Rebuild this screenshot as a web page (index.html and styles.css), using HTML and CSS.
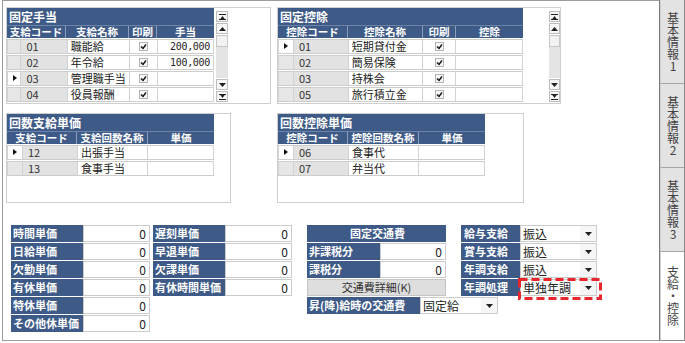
FILE: index.html
```html
<!DOCTYPE html>
<html lang="ja">
<head>
  <meta charset="UTF-8" />
  <title>支給・控除</title>
  <link rel="stylesheet" href="styles.css">
</head>
<body>
  <div class="app">
    <div class="main">
      <div class="row-top">
        <div class="box box-teate">
          <div class="grid grid-wide">
            <div class="grid-title">固定手当</div>
            <div class="grid-head">
              <span class="h-code">支給コード</span>
              <span class="c-name">支給名称</span>
              <span class="c-print">印刷</span>
              <span class="c-amt">手当</span>
            </div>
            <div class="grid-row">
              <span class="c-sel"></span><span class="c-code">01</span><span class="c-name">職能給</span>
              <span class="c-print"><i class="chk"></i></span><span class="c-amt num">200,000</span>
            </div>
            <div class="grid-row">
              <span class="c-sel"></span><span class="c-code">02</span><span class="c-name">年令給</span>
              <span class="c-print"><i class="chk"></i></span><span class="c-amt num">100,000</span>
            </div>
            <div class="grid-row">
              <span class="c-sel current"></span><span class="c-code">03</span><span class="c-name">管理職手当</span>
              <span class="c-print"><i class="chk"></i></span><span class="c-amt num"></span>
            </div>
            <div class="grid-row">
              <span class="c-sel"></span><span class="c-code">04</span><span class="c-name">役員報酬</span>
              <span class="c-print"><i class="chk"></i></span><span class="c-amt num"></span>
            </div>
          </div>
          <div class="scroll">
            <span class="sb-btn sb-first"></span>
            <span class="sb-btn sb-up"></span>
            <span class="sb-thumb"></span>
            <span class="sb-track"></span>
            <span class="sb-btn sb-down"></span>
            <span class="sb-btn sb-last"></span>
          </div>
        </div>

        <div class="box box-koujo">
          <div class="grid grid-wide">
            <div class="grid-title">固定控除</div>
            <div class="grid-head">
              <span class="h-code">控除コード</span>
              <span class="c-name">控除名称</span>
              <span class="c-print">印刷</span>
              <span class="c-amt2">控除</span>
            </div>
            <div class="grid-row">
              <span class="c-sel current"></span><span class="c-code">01</span><span class="c-name">短期貸付金</span>
              <span class="c-print"><i class="chk"></i></span><span class="c-amt2 num"></span>
            </div>
            <div class="grid-row">
              <span class="c-sel"></span><span class="c-code">02</span><span class="c-name">簡易保険</span>
              <span class="c-print"><i class="chk"></i></span><span class="c-amt2 num"></span>
            </div>
            <div class="grid-row">
              <span class="c-sel"></span><span class="c-code">03</span><span class="c-name">持株会</span>
              <span class="c-print"><i class="chk"></i></span><span class="c-amt2 num"></span>
            </div>
            <div class="grid-row">
              <span class="c-sel"></span><span class="c-code">05</span><span class="c-name">旅行積立金</span>
              <span class="c-print"><i class="chk"></i></span><span class="c-amt2 num"></span>
            </div>
          </div>
          <div class="scroll scroll-far">
            <span class="sb-btn sb-first"></span>
            <span class="sb-btn sb-up"></span>
            <span class="sb-thumb"></span>
            <span class="sb-track"></span>
            <span class="sb-btn sb-down"></span>
            <span class="sb-btn sb-last"></span>
          </div>
        </div>
      </div>

      <div class="row-mid">
        <div class="box box-kaisu">
          <div class="grid">
            <div class="grid-title">回数支給単価</div>
            <div class="grid-head">
              <span class="h-code">支給コード</span>
              <span class="c-name2">支給回数名称</span>
              <span class="c-price">単価</span>
            </div>
            <div class="grid-row">
              <span class="c-sel current"></span><span class="c-code">12</span><span class="c-name2">出張手当</span><span class="c-price"></span>
            </div>
            <div class="grid-row">
              <span class="c-sel"></span><span class="c-code">13</span><span class="c-name2">食事手当</span><span class="c-price"></span>
            </div>
          </div>
        </div>

        <div class="box box-kaisu2">
          <div class="grid">
            <div class="grid-title">回数控除単価</div>
            <div class="grid-head">
              <span class="h-code">控除コード</span>
              <span class="c-name2">控除回数名称</span>
              <span class="c-price">単価</span>
            </div>
            <div class="grid-row">
              <span class="c-sel current"></span><span class="c-code">06</span><span class="c-name2">食事代</span><span class="c-price"></span>
            </div>
            <div class="grid-row">
              <span class="c-sel"></span><span class="c-code">07</span><span class="c-name2">弁当代</span><span class="c-price"></span>
            </div>
          </div>
        </div>
      </div>

      <div class="fields">
        <div class="fcol">
          <div class="frow"><span class="flabel">時間単価</span><span class="fval">0</span></div>
          <div class="frow"><span class="flabel">日給単価</span><span class="fval">0</span></div>
          <div class="frow"><span class="flabel">欠勤単価</span><span class="fval">0</span></div>
          <div class="frow"><span class="flabel">有休単価</span><span class="fval">0</span></div>
          <div class="frow"><span class="flabel">特休単価</span><span class="fval">0</span></div>
          <div class="frow"><span class="flabel">その他休単価</span><span class="fval">0</span></div>
        </div>
        <div class="fcol fcol-b">
          <div class="frow"><span class="flabel">遅刻単価</span><span class="fval">0</span></div>
          <div class="frow"><span class="flabel">早退単価</span><span class="fval">0</span></div>
          <div class="frow"><span class="flabel">欠課単価</span><span class="fval">0</span></div>
          <div class="frow"><span class="flabel">有休時間単価</span><span class="fval">0</span></div>
        </div>
        <div class="fcol fcol-c">
          <div class="frow"><span class="flabel full">固定交通費</span></div>
          <div class="frow"><span class="flabel">非課税分</span><span class="fval">0</span></div>
          <div class="frow"><span class="flabel">課税分</span><span class="fval">0</span></div>
          <div class="frow"><span class="fbtn">交通費詳細(K)</span></div>
          <div class="frow frow-wide"><span class="flabel wide">昇(降)給時の交通費</span><span class="fsel">固定給<i class="arrow"></i></span></div>
        </div>
        <div class="fcol fcol-d">
          <div class="frow"><span class="flabel">給与支給</span><span class="fsel">振込<i class="arrow"></i></span></div>
          <div class="frow"><span class="flabel">賞与支給</span><span class="fsel">振込<i class="arrow"></i></span></div>
          <div class="frow"><span class="flabel">年調支給</span><span class="fsel">振込<i class="arrow"></i></span></div>
          <div class="frow">
            <span class="flabel">年調処理</span>
            <span class="fsel marked">単独年調<i class="arrow"></i>
              <svg class="mark" width="84" height="22" viewBox="0 0 84 22"><rect x="1.5" y="1.5" width="81" height="19" fill="none" stroke="#e8262b" stroke-width="3" stroke-dasharray="8 4"/></svg>
            </span>
          </div>
        </div>
      </div>
    </div>

    <div class="tabs">
      <div class="tab"><span class="tab-text">基本情報1</span></div>
      <div class="tab"><span class="tab-text">基本情報2</span></div>
      <div class="tab"><span class="tab-text">基本情報3</span></div>
      <div class="tab tab-on"><span class="tab-text">支給・控除</span></div>
    </div>
  </div>
</body>
</html>
```

FILE: styles.css
```css
* {
  box-sizing: border-box;
}
body {
  margin: 0;
  font-family: "Noto Sans CJK JP", sans-serif;
  font-size: 11px;
  color: #222;
  background: #fff;
}
.app {
  display: flex;
  width: 685px;
  height: 343px;
}
.main {
  width: 658px;
  height: 341px;
  margin-left: 2px;
  border: 1px solid #9c9c9c;
  border-right-color: #7a7a7a;
  padding: 6px 0 0 3px;
}

/* grids */
.row-top,
.row-mid {
  display: flex;
  gap: 6px;
}
.row-mid {
  margin-top: 9px;
}
.box {
  display: flex;
  border: 1px solid #cfcfcf;
  background: #fff;
}
.box-teate { width: 265px; height: 97px; }
.box-koujo { width: 284px; height: 97px; }
.box-kaisu { width: 225px; height: 90px; }
.box-kaisu2 { width: 247px; height: 90px; margin-left: 40px; }

.grid-wide { width: 247px; }
.box-koujo .grid-wide { width: 245px; }
.grid { width: 207px; }

.grid-title {
  height: 17px;
  line-height: 17px;
  padding-left: 2px;
  background: #3e5a87;
  color: #fff;
  font-weight: bold;
  font-size: 12px;
}
.grid-head {
  display: flex;
  height: 13px;
  line-height: 12px;
  background: #3e5a87;
  color: #fff;
  font-weight: bold;
  font-size: 10.5px;
  border-top: 1px solid #6d84a8;
}
.grid-head span {
  text-align: center;
  border-left: 1px solid #8a9dbc;
  white-space: nowrap;
}
.grid-head span:first-child {
  border-left: none;
}
.grid-row {
  display: flex;
  height: 15px;
  line-height: 13px;
  margin-top: 1px;
  border-top: 1px solid #cdcdcd;
  border-bottom: 1px solid #cdcdcd;
}
.grid-row span {
  border-left: 1px solid #d2d2d2;
  padding: 0 3px;
  white-space: nowrap;
}
.grid-row span:last-child {
  border-right: 1px solid #d2d2d2;
}
.c-sel {
  width: 15px;
  background: #e6e6e6;
  position: relative;
}
.c-sel.current {
  background: #fff;
}
.c-sel.current::after {
  content: "";
  position: absolute;
  left: 5px;
  top: 3px;
  border-left: 4px solid #111;
  border-top: 3.5px solid transparent;
  border-bottom: 3.5px solid transparent;
}
.h-code { width: 70px; }
.c-code {
  width: 55px;
  background: #e2e2e2;
  color: #333;
  padding-left: 5px !important;
}
.c-name { width: 75px; }
.c-print {
  width: 33px;
  text-align: center;
}
.c-amt { width: 69px; }
.c-amt2 { width: 68px; }
.c-name2 { width: 70px; }
.c-price { width: 67px; }
.grid-head .h-code { width: 69px; }
.grid-head .c-name2 { width: 71px; }
.grid-head .c-price { width: 67px; }
.num {
  text-align: right;
  font-family: "DejaVu Sans Mono", monospace;
  font-size: 10px;
  letter-spacing: -0.3px;
}
.chk {
  display: inline-block;
  width: 9px;
  height: 9px;
  margin-top: 2px;
  vertical-align: top;
  border: 1px solid #b4b4b4;
  background: #f6f6f6 url("data:image/svg+xml,%3Csvg xmlns='http://www.w3.org/2000/svg' width='7' height='7'%3E%3Cpath d='M1 3.5 L3 5.5 L6 1.5' fill='none' stroke='%23111' stroke-width='1.4'/%3E%3C/svg%3E") no-repeat center;
}

/* scrollbars */
.scroll {
  display: flex;
  flex-direction: column;
  width: 12px;
  margin: 3px 0 1px 2px;
}
.scroll-far {
  margin-left: 26px;
}
.sb-btn {
  height: 11px;
  border: 1px solid #bdbdbd;
  background: #f7f7f7 no-repeat center;
  margin-bottom: 1px;
}
.sb-first {
  background-image: url("data:image/svg+xml,%3Csvg xmlns='http://www.w3.org/2000/svg' width='7' height='6'%3E%3Crect x='0' y='0' width='7' height='1' fill='%23222'/%3E%3Cpath d='M0.5 6 L3.5 2 L6.5 6Z' fill='%23222'/%3E%3Crect x='0' y='5' width='7' height='1' fill='%23222'/%3E%3C/svg%3E");
}
.sb-up {
  background-image: url("data:image/svg+xml,%3Csvg xmlns='http://www.w3.org/2000/svg' width='7' height='4'%3E%3Cpath d='M0 4 L3.5 0 L7 4Z' fill='%23222'/%3E%3C/svg%3E");
}
.sb-down {
  background-image: url("data:image/svg+xml,%3Csvg xmlns='http://www.w3.org/2000/svg' width='7' height='4'%3E%3Cpath d='M0 0 L3.5 4 L7 0Z' fill='%23222'/%3E%3C/svg%3E");
}
.sb-last {
  background-image: url("data:image/svg+xml,%3Csvg xmlns='http://www.w3.org/2000/svg' width='7' height='6'%3E%3Crect x='0' y='0' width='7' height='1' fill='%23222'/%3E%3Cpath d='M0.5 0 L3.5 4 L6.5 0Z' fill='%23222'/%3E%3Crect x='0' y='5' width='7' height='1' fill='%23222'/%3E%3C/svg%3E");
  margin-bottom: 0;
}
.sb-thumb {
  height: 12px;
  border: 1px solid #c6c6c6;
  background: #f2f2f2;
}
.sb-track {
  flex: 1;
  background: #e4e4e4;
  margin-bottom: 1px;
}

/* fields */
.fields {
  display: flex;
  margin: 22px 0 0 5px;
}
.fcol {
  display: flex;
  flex-direction: column;
  gap: 1px;
  width: 139px;
}
.fcol-b { margin-left: 3px; }
.fcol-c { margin-left: 15px; }
.fcol-d { margin-left: 15px; width: 136px; }
.frow {
  display: flex;
  height: 17px;
}
.frow-wide { width: 191px; }
.flabel {
  width: 72px;
  flex: none;
  background: #3e5a87;
  color: #fff;
  font-weight: bold;
  line-height: 17px;
  padding-left: 2px;
  white-space: nowrap;
}
.fcol-c .flabel { width: 73px; }
.fcol-d .flabel { width: 59px; padding-left: 3px; }
.fcol-c .flabel.wide { width: 113px; }
.flabel.full {
  width: 100% !important;
  text-align: center;
}
.fval {
  flex: 1;
  border: 1px solid #cbcbcb;
  background: #fff;
  text-align: right;
  padding-right: 3px;
  line-height: 15px;
  font-size: 12px;
  color: #222;
}
.fbtn {
  flex: 1;
  background: #dedede;
  border: 1px solid #c4c4c4;
  text-align: center;
  line-height: 15px;
  color: #333;
}
.fsel {
  flex: 1;
  position: relative;
  border: 1px solid #cbcbcb;
  background: #fff;
  line-height: 15px;
  padding-left: 2px;
  font-size: 12px;
}
.arrow {
  position: absolute;
  right: 0;
  top: 0;
  width: 16px;
  height: 15px;
  background: #f6f6f6 url("data:image/svg+xml,%3Csvg xmlns='http://www.w3.org/2000/svg' width='7' height='4'%3E%3Cpath d='M0 0 L3.5 4 L7 0Z' fill='%23222'/%3E%3C/svg%3E") no-repeat center;
}
.mark {
  position: absolute;
  left: -3px;
  top: -2px;
}

/* tabs */
.tabs {
  width: 25px;
  height: 341px;
  display: flex;
  flex-direction: column;
  border-right: 1px solid #8a8a8a;
}
.tab {
  height: 84px;
  flex: none;
  display: flex;
  justify-content: center;
  padding-top: 12px;
  background: #e3e3e3;
  border-bottom: 1px solid #a6a6a6;
  border-left: 1px solid #cfcfcf;
}
.tab-text {
  writing-mode: vertical-rl;
  text-orientation: upright;
  font-size: 12px;
  line-height: 14px;
  color: #444;
}
.tab-on {
  flex: 1;
  background: #fff;
  padding-top: 14px;
  border-bottom-color: #8a8a8a;
}
```
